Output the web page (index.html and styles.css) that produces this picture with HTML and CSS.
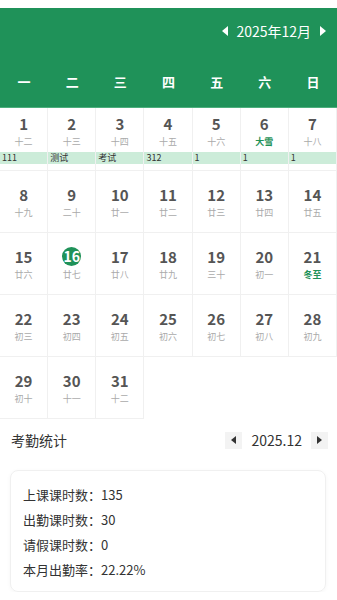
FILE: index.html
```html
<!DOCTYPE html>
<html lang="zh-CN">

<head>
    <meta charset="UTF-8">
    <meta name="viewport" content="width=device-width, initial-scale=1.0">
    <title>考勤日历</title>
    <link rel="stylesheet" href="styles.css">
</head>

<body>
    <header class="cal-head">
        <div class="month-nav">
            <svg class="arrow" width="6" height="10" viewBox="0 0 6 10"><path d="M6 0 L0 5 L6 10 Z" fill="#fff"/></svg>
            <span class="month-title">2025年12月</span>
            <svg class="arrow" width="6" height="10" viewBox="0 0 6 10"><path d="M0 0 L6 5 L0 10 Z" fill="#fff"/></svg>
        </div>
        <div class="weekdays">
            <div>一</div>
            <div>二</div>
            <div>三</div>
            <div>四</div>
            <div>五</div>
            <div>六</div>
            <div>日</div>
        </div>
    </header>

    <div class="days">
        <!-- 第一周，带课程条 -->
        <div class="day first"><span class="num">1</span><span class="lunar">十二</span><div class="event">111</div></div>
        <div class="day first"><span class="num">2</span><span class="lunar">十三</span><div class="event">测试</div></div>
        <div class="day first"><span class="num">3</span><span class="lunar">十四</span><div class="event">考试</div></div>
        <div class="day first"><span class="num">4</span><span class="lunar">十五</span><div class="event">312</div></div>
        <div class="day first"><span class="num">5</span><span class="lunar">十六</span><div class="event">1</div></div>
        <div class="day first"><span class="num">6</span><span class="lunar term">大雪</span><div class="event">1</div></div>
        <div class="day first"><span class="num">7</span><span class="lunar">十八</span><div class="event">1</div></div>

        <div class="day"><span class="num">8</span><span class="lunar">十九</span></div>
        <div class="day"><span class="num">9</span><span class="lunar">二十</span></div>
        <div class="day"><span class="num">10</span><span class="lunar">廿一</span></div>
        <div class="day"><span class="num">11</span><span class="lunar">廿二</span></div>
        <div class="day"><span class="num">12</span><span class="lunar">廿三</span></div>
        <div class="day"><span class="num">13</span><span class="lunar">廿四</span></div>
        <div class="day"><span class="num">14</span><span class="lunar">廿五</span></div>

        <div class="day"><span class="num">15</span><span class="lunar">廿六</span></div>
        <div class="day"><span class="num today">16</span><span class="lunar">廿七</span></div>
        <div class="day"><span class="num">17</span><span class="lunar">廿八</span></div>
        <div class="day"><span class="num">18</span><span class="lunar">廿九</span></div>
        <div class="day"><span class="num">19</span><span class="lunar">三十</span></div>
        <div class="day"><span class="num">20</span><span class="lunar">初一</span></div>
        <div class="day"><span class="num">21</span><span class="lunar term">冬至</span></div>

        <div class="day"><span class="num">22</span><span class="lunar">初三</span></div>
        <div class="day"><span class="num">23</span><span class="lunar">初四</span></div>
        <div class="day"><span class="num">24</span><span class="lunar">初五</span></div>
        <div class="day"><span class="num">25</span><span class="lunar">初六</span></div>
        <div class="day"><span class="num">26</span><span class="lunar">初七</span></div>
        <div class="day"><span class="num">27</span><span class="lunar">初八</span></div>
        <div class="day"><span class="num">28</span><span class="lunar">初九</span></div>

        <div class="day"><span class="num">29</span><span class="lunar">初十</span></div>
        <div class="day"><span class="num">30</span><span class="lunar">十一</span></div>
        <div class="day"><span class="num">31</span><span class="lunar">十二</span></div>
    </div>

    <section class="stats">
        <div class="stats-head">
            <h2 class="stats-title">考勤统计</h2>
            <div class="stats-nav">
                <span class="nav-btn"><svg width="5" height="8" viewBox="0 0 5 8"><path d="M5 0 L0 4 L5 8 Z" fill="#333"/></svg></span>
                <span class="stats-month">2025.12</span>
                <span class="nav-btn"><svg width="5" height="8" viewBox="0 0 5 8"><path d="M0 0 L5 4 L0 8 Z" fill="#333"/></svg></span>
            </div>
        </div>
        <div class="stats-card">
            <p>上课课时数：135</p>
            <p>出勤课时数：30</p>
            <p>请假课时数：0</p>
            <p>本月出勤率：22.22%</p>
        </div>
    </section>
</body>

</html>
```

FILE: styles.css
```css
body {
    margin: 0;
    padding-top: 8px;
    font-family: "Noto Sans CJK SC", "Noto Sans", sans-serif;
    background-color: #fff;
    color: #333;
}

/* 顶部绿色区域 */
.cal-head {
    background-color: #1f9259;
    color: #fff;
    padding-bottom: 11px;
    border-bottom: 1px solid #4caf7d;
}

.month-nav {
    display: flex;
    justify-content: flex-end;
    align-items: center;
    height: 30px;
    padding-top: 8px;
    padding-right: 11px;
}

.month-title {
    font-size: 14px;
    margin: 0 9px 0 8px;
}

.weekdays {
    display: grid;
    grid-template-columns: repeat(7, 1fr);
    height: 30px;
    margin-top: 20px;
    align-items: center;
    text-align: center;
    font-size: 13px;
    font-weight: bold;
}

/* 日期格子 */
.days {
    display: grid;
    grid-template-columns: repeat(7, 1fr);
}

.day {
    height: 62px;
    box-sizing: border-box;
    border-right: 1px solid #f0f0f0;
    border-bottom: 1px solid #f0f0f0;
    display: flex;
    flex-direction: column;
    align-items: center;
    justify-content: center;
    padding-top: 1px;
}

.day.first {
    height: 63px;
    padding-top: 0;
}

.num {
    font-size: 15px;
    font-weight: bold;
    line-height: 18px;
    color: #555;
}

.num.today {
    width: 19px;
    height: 19px;
    line-height: 19px;
    border-radius: 50%;
    background-color: #1f9259;
    color: #fff;
    text-align: center;
    font-size: 14px;
}

.lunar {
    font-size: 9px;
    line-height: 12px;
    margin-top: 3px;
    color: #aaa;
}

.lunar.term {
    color: #1f9259;
    font-weight: bold;
}

.event {
    align-self: stretch;
    margin-top: 4px;
    height: 12px;
    line-height: 12px;
    font-size: 9px;
    padding-left: 2px;
    background-color: #ccecd9;
    color: #333;
}

/* 考勤统计 */
.stats {
    padding: 0 9px 0 10px;
}

.stats-head {
    display: flex;
    justify-content: space-between;
    align-items: center;
    height: 20px;
    margin-top: 11px;
}

.stats-title {
    margin: 0;
    padding-left: 1px;
    font-size: 14px;
    font-weight: normal;
    color: #333;
}

.stats-nav {
    display: flex;
    align-items: center;
}

.nav-btn {
    display: flex;
    align-items: center;
    justify-content: center;
    width: 17px;
    height: 17px;
    background-color: #f3f3f3;
}

.stats-month {
    font-size: 14px;
    margin: 0 9px;
}

.stats-card {
    margin-top: 20px;
    margin-right: 2px;
    padding: 11px 12px 9px;
    border: 1px solid #f0f0f0;
    border-radius: 8px;
    box-shadow: 0 1px 4px rgba(0, 0, 0, 0.04);
}

.stats-card p {
    margin: 0;
    font-size: 13px;
    line-height: 25px;
}
```
